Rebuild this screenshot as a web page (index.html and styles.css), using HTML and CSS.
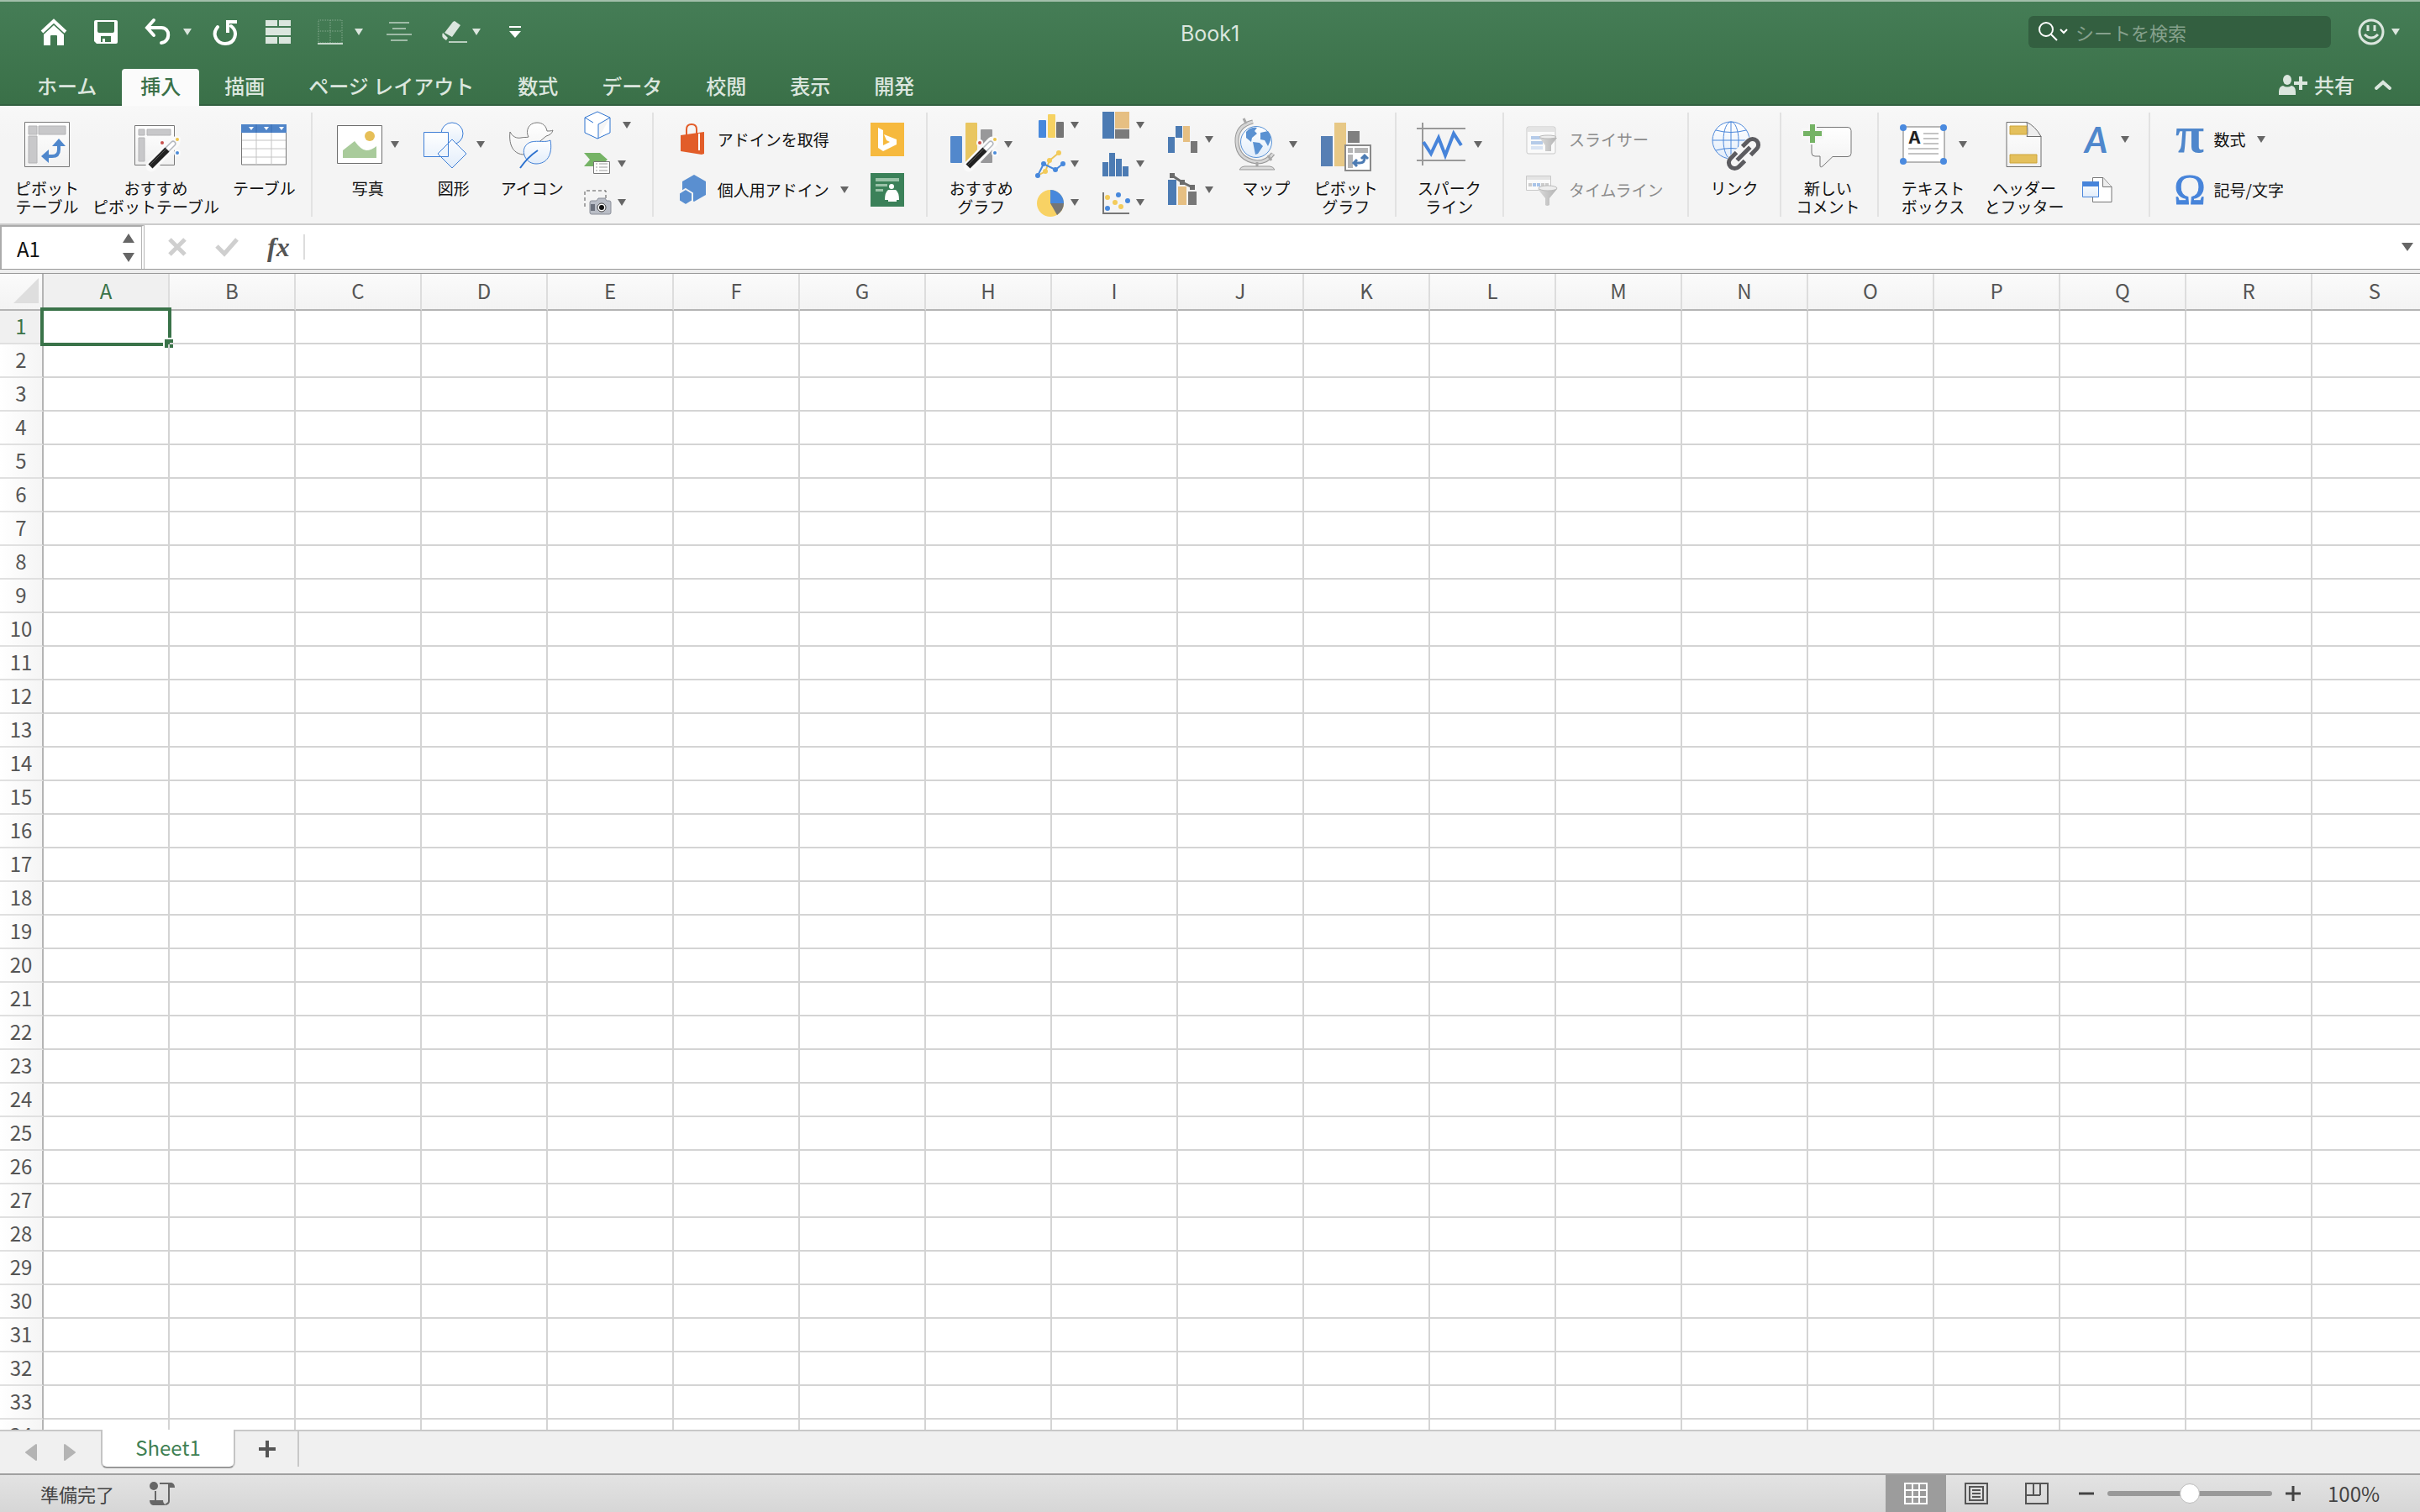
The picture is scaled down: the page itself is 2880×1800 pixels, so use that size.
FILE: index.html
```html
<!DOCTYPE html>
<html lang="ja">

<head>
    <meta charset="UTF-8">
    <meta name="viewport" content="width=device-width, initial-scale=1.0">
    <title>Book1</title>
    <link rel="stylesheet" href="styles.css">
</head>

<body>
    <svg class="defs" width="0" height="0" aria-hidden="true">
        <defs>
            <linearGradient id="paper" x1="0" y1="0" x2="0" y2="1">
                <stop offset="0" stop-color="#fff" />
                <stop offset="1" stop-color="#f1f1f1" />
            </linearGradient>
            <linearGradient id="sky" x1="0" y1="0" x2="0" y2="1">
                <stop offset="0" stop-color="#fff" />
                <stop offset="1" stop-color="#e2edfa" />
            </linearGradient>
            <linearGradient id="funnel" x1="0" y1="0" x2="1" y2="0">
                <stop offset="0" stop-color="#dadada" />
                <stop offset="1" stop-color="#b4b4b4" />
            </linearGradient>
        </defs>
        <symbol id="wand" viewBox="0 0 60 60">
            <path d="M22 53L50 24" stroke="#fafafa" stroke-width="13" stroke-linecap="round" />
            <circle cx="35" cy="25" r="4" fill="#fafafa" />
            <circle cx="53" cy="21" r="4" fill="#fafafa" />
            <circle cx="53" cy="37" r="4" fill="#fafafa" />
            <path d="M38 36L48 26" stroke="#b3b7bd" stroke-width="7" stroke-linecap="round" />
            <path d="M41 33L48 26" stroke="#fff" stroke-width="4" stroke-linecap="round" />
            <path d="M21 53L41 33" stroke="#222" stroke-width="7" />
            <path d="M21 51L40 32" stroke="#555" stroke-width="1" />
            <circle cx="35" cy="25" r="2" fill="#c8504c" />
            <circle cx="53" cy="21" r="2" fill="#ecc34b" />
            <circle cx="53" cy="37" r="2" fill="#4b8bd8" />
        </symbol>
    </svg>

    <header class="top">
        <div class="title_bar">
            <div class="quick">
                <button aria-label="ホーム画面"><svg width="32" height="32" viewBox="0 0 32 32"><path d="M2 16L16 3l14 13" fill="none" stroke="#fff" stroke-width="4" /><path d="M4 19L16 8l12 11v13h-8V21q0-1-1-1h-6q-1 0-1 1v11H4z" fill="#fff" /></svg></button>
                <button aria-label="保存"><svg width="28" height="30" viewBox="0 0 28 30"><path d="M2 1h24q2 0 2 2v24q0 2-2 2H3l-3-3V3q0-2 2-2z" fill="#fff" /><path d="M4 3h20v11q0 2-2 2H6q-2 0-2-2zM8 20h12v7h-7v-4h-3v4H8z" fill="#42784f" /></svg></button>
                <button aria-label="元に戻す"><svg width="32" height="32" viewBox="0 0 32 32"><path d="M11 2L3 11l8 9M3 11h17c11 0 11 17 0 18" fill="none" stroke="#fff" stroke-width="4" stroke-linecap="round" /></svg><i class="arrow"></i></button>
                <button aria-label="繰り返し"><svg width="30" height="32" viewBox="0 0 30 32"><path d="M5 10C-3 20 5 30 14 30c12 0 16-14 7-21" fill="none" stroke="#fff" stroke-width="4" stroke-linecap="round" /><path d="M17 17V4h11" fill="none" stroke="#fff" stroke-width="4" /></svg></button>
                <button aria-label="結合"><svg width="30" height="30" viewBox="0 0 30 30" fill="#dbe6de"><path d="M0 1h14v7H0zM16 1h14v7H16zM0 10h30v9H0zM0 21h14v8H0zM16 21h14v8H16z" /></svg></button>
                <button aria-label="罫線"><svg width="30" height="32" viewBox="0 0 30 32"><path d="M1 2h28v27H1zM15 2v27M1 15h28" fill="none" stroke="#86a98f" stroke-width="1" stroke-dasharray="1 1" /><path d="M0 30h30" stroke="#c6d7cb" stroke-width="2" /></svg><i class="arrow"></i></button>
                <button aria-label="中央揃え"><svg width="30" height="30" viewBox="0 0 30 30"><path d="M3 4h24M7 11h16M0 18h30M5 25h20" stroke="#9fbba7" stroke-width="2" /></svg></button>
                <button aria-label="クリア"><svg width="30" height="30" viewBox="0 0 30 30"><path d="M15 2l7 5-10 14-9-5L13 3zM1 16l6 6-2 3q-7-4-4-9z" fill="#dbe6de" /><path d="M8 27h22" stroke="#b9cdbf" stroke-width="2" /></svg><i class="arrow"></i></button>
                <button aria-label="ツール バーのユーザー設定"><svg width="14" height="16" viewBox="0 0 14 16" fill="#fff"><path d="M0 1h14v2H0zM0 7h14l-7 8z" /></svg></button>
            </div>
            <h1>Book1</h1>
            <div class="title_right">
                <label class="search">
                    <svg width="36" height="24" viewBox="0 0 36 24" fill="none" stroke="#fff" stroke-width="2"><circle cx="9" cy="9" r="8" /><path d="M15 15l7 7M26 9l4 4 4-4" /></svg>
                    <input type="text" placeholder="シートを検索" aria-label="シートを検索">
                </label>
                <button aria-label="フィードバック"><svg width="32" height="32" viewBox="0 0 32 32" fill="none" stroke="#dbe6de" stroke-width="3"><circle cx="16" cy="16" r="14" /><path d="M12 8v7M20 8v7M8 19q8 8 16 0" /></svg><i class="arrow"></i></button>
            </div>
        </div>
        <nav class="tabs">
            <button>ホーム</button>
            <button class="current">挿入</button>
            <button>描画</button>
            <button>ページ レイアウト</button>
            <button>数式</button>
            <button>データ</button>
            <button>校閲</button>
            <button>表示</button>
            <button>開発</button>
            <div class="share">
                <button><svg width="36" height="26" viewBox="0 0 36 26" fill="#dbe6de"><ellipse cx="10" cy="7" rx="5" ry="6" /><path d="M0 25v-4q0-6 5-7 5 3 10 0 5 1 5 7v4zM24 3h4v6h6v4h-6v6h-4v-6h-6V9h6z" /></svg>共有</button>
                <button aria-label="リボンを折りたたむ"><svg width="20" height="12" viewBox="0 0 20 12"><path d="M2 10l8-7 8 7" fill="none" stroke="#dbe6de" stroke-width="4" stroke-linecap="round" /></svg></button>
            </div>
        </nav>
    </header>

    <div class="ribbon">
        <div class="group g_table">
            <button class="big">
                <span class="pic"><svg width="54" height="54" viewBox="0 0 54 54"><path d="M.5 .5h53v53H.5z" fill="url(#paper)" stroke="#777" /><path d="M5 5h10v10H5zM17 5h32v10H17zM5 17h10v32H5z" fill="#c8c8ca" stroke="#b4b4b6" stroke-width="1" /><path d="M28 41h5q8 0 8-8v-5" fill="none" stroke="#4f87cc" stroke-width="4" /><path d="M41 20l8 9H33zM20 41l9-8v16z" fill="#4f87cc" /></svg></span>
                <span>ピボット<br>テーブル</span>
            </button>
            <button class="big">
                <span class="pic"><svg width="54" height="54" viewBox="0 0 54 54"><path d="M2.500 4.500h47v47h-47z" fill="url(#paper)" stroke="#777" /><path d="M7 9h7v7H7zM17 9h28v7H17zM7 19h7v28H7z" fill="#c8c8ca" stroke="#b4b4b6" /><use href="#wand" width="60" height="60" /></svg></span>
                <span>おすすめ<br>ピボットテーブル</span>
            </button>
            <button class="big">
                <span class="pic"><svg width="54" height="54" viewBox="0 0 54 54"><path d="M.5 4h53v47H.5z" fill="#fff" stroke="#777" /><path d="M1 22h52M1 32h52M1 42h52M18 12v39M36 12v39" stroke="#c4c4c4" /><path d="M0 3h54v10H0z" fill="#4f84c8" /><path d="M18 3v10M36 3v10" stroke="#3a6fb5" /><path d="M9 6h6l-3 4zM27 6h6l-3 4zM45 6h6l-3 4z" fill="#fff" /></svg></span>
                <span>テーブル</span>
            </button>
        </div>

        <div class="group g_pict">
            <button class="big wide">
                <span class="pic"><svg width="54" height="54" viewBox="0 0 54 54"><path d="M.5 4.500h53v45H.5z" fill="#fff" stroke="#6e6e6e" /><circle cx="39" cy="17" r="6" fill="#e6bf58" /><path d="M7 34l14-11q8 11 14 11 6 0 12-5v14H7z" fill="#a9cb9b" /></svg><i class="arrow"></i></span>
                <span>写真</span>
            </button>
            <button class="big wide">
                <span class="pic"><svg width="54" height="54" viewBox="0 0 54 54" fill="url(#sky)" stroke="#3f7fd6"><circle cx="35" cy="14" r="13" /><path d="M1.500 12.500h29v29h-29zM35 21l17 17-17 17-17-17z" /></svg><i class="arrow"></i></span>
                <span>図形</span>
            </button>
            <button class="big">
                <span class="pic"><svg width="54" height="54" viewBox="0 0 54 54"><path d="M1 12c3 6 8 8 13 7 4-1 6 0 9-1-4-7 0-17 10-17 7 0 11 4 12 10 3 0 5 0 7-1-1 4-4 6-8 7-2 2-4 3-6 5l-20 17C6 39-1 29 1 12z" fill="url(#paper)" stroke="#777" /><path d="M49 22c3 17-4 28-17 28-15 0-21-21-6-26 9-2 17 1 23-2z" fill="url(#sky)" stroke="#3f7fd6" /><path d="M34 34Q22 42 13 55" fill="none" stroke="#2d72cf" stroke-width="2" /></svg></span>
                <span>アイコン</span>
            </button>
            <div class="stack3">
                <button class="cube" aria-label="3D モデル"><svg width="32" height="34" viewBox="0 0 32 34" fill="#fff" stroke="#2f74d0"><path d="M16 1l15 7v18l-15 7-15-7V8zM31 8l-14 8v17M1 8l10 6" /></svg><i class="arrow"></i></button>
                <button aria-label="SmartArt"><svg width="32" height="26" viewBox="0 0 32 26"><path d="M0 0h19l9 8-9 8H0l7-8z" fill="#75b365" /><path d="M11.500 10.500h19v14h-19z" fill="#fff" stroke="#777" /><path d="M14 13h2M18 13h10M14 17h2M18 17h10M14 21h2M18 21h10" stroke="#999" /></svg><i class="arrow"></i></button>
                <button aria-label="スクリーンショット"><svg width="32" height="30" viewBox="0 0 32 30"><path d="M1 20V1h25v12" fill="none" stroke="#555" stroke-dasharray="4 3" /><path d="M9 13h6l2-3h8l2 3h3q2 0 2 2v12q0 2-2 2H9q-2 0-2-2V15q0-2 2-2z" fill="#b9bdc6" stroke="#8b8f99" /><path d="M8 17h5v8H8z" fill="#6c717d" /><circle cx="21" cy="21" r="5" fill="#fff" stroke="#444" /><circle cx="21" cy="21" r="3" fill="#111" /></svg><i class="arrow"></i></button>
            </div>
        </div>

        <div class="group g_addin">
            <div class="stack2">
                <button><svg width="34" height="38" viewBox="0 0 34 38"><path d="M10 14V7q0-6 6-6t6 6v5" fill="none" stroke="#e25d29" stroke-width="2" /><path d="M3 14l28-4v26l-3 1-25-4z" fill="#e25d29" /><path d="M25 12v20" stroke="#fff" stroke-width="2" /></svg>アドインを取得</button>
                <button><svg width="34" height="36" viewBox="0 0 34 36" fill="#5a8fd0"><path d="M19 0l14 8v16l-14 8-14-8V8z" /><path d="M9 17l8 5v9l-8 5-8-5v-9z" stroke="#f4f4f4" stroke-width="2" /></svg>個人用アドイン<i class="arrow"></i></button>
            </div>
            <div class="stack2">
                <button aria-label="Bing 地図"><svg width="40" height="40" viewBox="0 0 40 40"><path d="M0 0h40v40H0z" fill="#f6b93e" /><path d="M9 6l6 3v18l8-4-4-2-3-7 15 6v6L15 34l-6-4z" fill="#fff" /></svg></button>
                <button aria-label="ピープル グラフ"><svg width="40" height="40" viewBox="0 0 40 40"><path d="M0 0h40v40H0z" fill="#3b8159" /><path d="M6 6h28v4H6zM6 13h14v3H6zM6 19h9v3H6z" fill="#9ac3a8" /><circle cx="25" cy="16" r="3" fill="#fff" /><path d="M21 20h9q4 3 4 12h-3v2H21v-2h-4q0-9 4-12z" fill="#fff" /></svg></button>
            </div>
        </div>

        <div class="group g_chart">
            <button class="big">
                <span class="pic"><svg width="54" height="54" viewBox="0 0 54 54"><rect x="0" y="17" width="14" height="32" rx="1" fill="#5288cc" /><rect x="18" y="1" width="14" height="48" rx="1" fill="#e9c660" /><rect x="36" y="9" width="14" height="40" rx="1" fill="#98989a" /><use href="#wand" width="60" height="60" /></svg><i class="arrow"></i></span>
                <span>おすすめ<br>グラフ</span>
            </button>
            <div class="stack3">
                <button aria-label="縦棒"><svg width="36" height="32" viewBox="0 0 36 32"><rect x="4" y="10" width="9" height="21" rx="1" fill="#4788dc" /><rect x="15" y="3" width="9" height="28" rx="1" fill="#f6d262" /><rect x="25" y="12" width="9" height="19" rx="1" fill="#757575" /></svg><i class="arrow"></i></button>
                <button aria-label="折れ線"><svg width="36" height="32" viewBox="0 0 36 32" fill="none" stroke-width="2"><path d="M3 30l9-5 5-13L28 3" stroke="#ecc558" /><g fill="#f3cb5a"><circle cx="12" cy="25" r="3" /><circle cx="17" cy="12" r="3" /><circle cx="28" cy="3" r="3" /></g><path d="M3 30l7-14 14 7 9-7" stroke="#4788dc" /><g fill="#4788dc"><circle cx="3" cy="30" r="3" /><circle cx="10" cy="16" r="3" /><circle cx="24" cy="23" r="3" /><circle cx="33" cy="16" r="3" /></g></svg><i class="arrow"></i></button>
                <button aria-label="円"><svg width="36" height="32" viewBox="0 0 36 32"><circle cx="18" cy="17" r="16" fill="#f8d264" /><path d="M18 17V1a16 16 0 0 1 16 16z" fill="#4788dc" /><path d="M18 17h16q0 8-8 14z" fill="#757575" /></svg><i class="arrow"></i></button>
            </div>
            <div class="stack3">
                <button aria-label="階層構造"><svg width="36" height="32" viewBox="0 0 36 32"><path d="M2 0h14v32H2z" fill="#4c7bb3" /><path d="M17 0h17v20H17z" fill="#e6bf82" /><path d="M17 21h17v11H17z" fill="#7b7b7b" /></svg><i class="arrow"></i></button>
                <button aria-label="統計"><svg width="36" height="32" viewBox="0 0 36 32"><path d="M2 14h7v17H2zM10 3h7v28h-7zM18 10h7v21h-7zM26 19h7v12h-7z" fill="#4c7bb3" /></svg><i class="arrow"></i></button>
                <button aria-label="散布図"><svg width="36" height="32" viewBox="0 0 36 32"><path d="M3 4v25h31" fill="none" stroke="#777" stroke-width="2" /><g fill="#f3cb5a"><circle cx="8" cy="10" r="3" /><circle cx="17" cy="16" r="3" /><circle cx="24" cy="21" r="3" /></g><g fill="#4788dc"><circle cx="21" cy="7" r="3" /><circle cx="32" cy="14" r="3" /><circle cx="8" cy="23" r="3" /></g></svg><i class="arrow"></i></button>
            </div>
            <div class="stack2 tight">
                <button aria-label="ウォーターフォール"><svg width="40" height="40" viewBox="0 0 40 40"><path d="M2 17h8v19H2zM11 4h8v14h-8z" fill="#4c7bb3" /><path d="M20 4h8v19h-8z" fill="#e6bf82" /><path d="M29 22h8v14h-8z" fill="#777" /></svg><i class="arrow"></i></button>
                <button aria-label="組み合わせ"><svg width="40" height="40" viewBox="0 0 40 40"><path d="M2 8h10v30H2z" fill="#4c7bb3" /><path d="M14 16h10v22H14z" fill="#e6bf82" /><path d="M26 22h10v16H26z" fill="#777" /><path d="M4 0h6v6H4zM16 8h6v6h-6zM28 14h6v6h-6z" fill="#6c6c6c" /><path d="M7 3l12 8 12 6" fill="none" stroke="#6c6c6c" stroke-width="3" /></svg><i class="arrow"></i></button>
            </div>
            <div class="pair">
                <button class="big">
                    <span class="pic"><svg width="54" height="60" viewBox="0 -3 54 60"><path d="M21 0Q1 5 2 24q1 21 24 24 12 0 19-10" fill="none" stroke="#999" stroke-width="5" /><path d="M21 0Q1 5 2 24q1 21 24 24 12 0 19-10" fill="none" stroke="#d6d6d6" stroke-width="3" /><path d="M10-4l3 6M39 40l4 6M26 48v6" stroke="#a8a8a8" stroke-width="3" /><path d="M5 57q2-4 6-4h30q4 0 6 4z" fill="#dcdcdc" stroke="#999" /><circle cx="25" cy="24" r="18.500" fill="url(#sky)" stroke="#5a93d6" stroke-width="1" /><path d="M13 12q5-6 13-5l-3 4 3 3-6 5-1 5-6-5zM21 24l8 1 4 4-6 9-3 1zM30 13l9-2q4 5 3 11l-3 7-4-7-5-1z" fill="#5b92d2" /></svg><i class="arrow"></i></span>
                    <span>マップ</span>
                </button>
                <button class="big">
                    <span class="pic"><svg width="60" height="54" viewBox="0 0 60 54"><path d="M0 17h14v36H0z" fill="#567fb4" /><path d="M16 1h14v52H16z" fill="#e7c886" /><path d="M32 11h14v14H32z" fill="#808080" /><path d="M29 28h30v30H29z" fill="#fff" stroke="#8a8a8a" stroke-width="2" /><path d="M32 31h6v6h-6zM40 31h16v6H40zM32 39h6v16h-6z" fill="#b5b5b5" /><path d="M40 49h6q6 0 6-6v-1M43 45l-4 4 4 4M48 44l4-4 4 4" fill="none" stroke="#4c7bb3" stroke-width="3" /></svg></span>
                    <span>ピボット<br>グラフ</span>
                </button>
            </div>
        </div>

        <div class="group g_spark">
            <button class="big">
                <span class="pic"><svg width="58" height="54" viewBox="0 0 58 54" fill="none"><path d="M7 1v51M0 8h58M0 46h58" stroke="#999" stroke-width="2" /><path d="M8 24l9 14 9-19 8 21 10-26 9 14" stroke="#4784da" stroke-width="4" /></svg><i class="arrow"></i></span>
                <span>スパーク<br>ライン</span>
            </button>
        </div>

        <div class="group g_filter">
            <div class="stack2">
                <button disabled><svg width="38" height="40" viewBox="0 0 38 40"><rect x="1" y="5" width="34" height="32" rx="2" fill="#fafafa" stroke="#c9c9c9" /><path d="M2 6h32v5H2z" fill="#e4e4e4" /><path d="M6 16h12v4H6zM6 22h14v4H6z" fill="#b5cbe9" /><path d="M6 28h14v4H6z" fill="#d9e4f3" /><path d="M16 18l7 9v7h7v-7l7-9z" fill="url(#funnel)" /><ellipse cx="26" cy="17" rx="10" ry="2" fill="#eee" stroke="#bbb" /></svg>スライサー</button>
                <button disabled><svg width="38" height="40" viewBox="0 0 38 40"><path d="M.5 3.500h29v17H.5z" fill="#fafafa" stroke="#c9c9c9" /><path d="M1 4h28v4H1z" fill="#e4e4e4" /><path d="M3 12h4v4H3zM18 12h4v4h-4zM23 12h4v4h-4z" fill="#ccc" /><path d="M8 12h4v4H8zM13 12h4v4h-4z" fill="#a9c4e8" /><path d="M14 19l9 11v8q2 2 5 0v-8l9-11z" fill="url(#funnel)" /><ellipse cx="26" cy="18" rx="11" ry="3" fill="#eee" stroke="#bbb" /></svg>タイムライン</button>
            </div>
        </div>

        <div class="group g_link">
            <button class="big">
                <span class="pic"><svg width="57" height="54" viewBox="0 0 57 54" fill="none"><g stroke="#4b87da"><circle cx="24" cy="22" r="22" fill="url(#sky)" /><ellipse cx="24" cy="22" rx="9" ry="22" /><path d="M24 0v44M2 22h44M6 10q18 5 36 0M6 34q18-5 36 0" /></g><g transform="rotate(-45 39 38)"><path d="M24 38h30" stroke="#f6f6f6" stroke-width="20" stroke-linecap="round" /><path d="M34 31H24a7 7 0 0 0 0 14h10M44 31h10a7 7 0 0 1 0 14H44" stroke="#5c5c60" stroke-width="5" /><path d="M28 38h22" stroke="#5c5c60" stroke-width="5" /></g></svg></span>
                <span>リンク</span>
            </button>
        </div>

        <div class="group g_note">
            <button class="big">
                <span class="pic"><svg width="58" height="54" viewBox="0 0 58 54"><path d="M13 6.500h39q4 0 4 4v27q0 4-4 4H34L22 53q-3 2-3-1V41h-6q-4 0-4-4v-27q0-3 4-3z" fill="url(#paper)" stroke="#777" /><path d="M5 1h10v6h8v14h-8v6H5v-6h-8V7h8z" fill="#f7f7f7" /><path d="M7 3h6v8h8v6h-8v8H7v-8h-8v-6h8z" fill="#75b365" /></svg></span>
                <span>新しい<br>コメント</span>
            </button>
        </div>

        <div class="group g_text">
            <button class="big">
                <span class="pic"><svg width="60" height="54" viewBox="0 0 60 54"><path d="M4 6h49v42H4z" fill="#fff" stroke="#777" /><text x="10" y="26" class="tb_a">A</text><path d="M28 14h18M28 20h18M28 26h18M10 32h36M10 38h36" stroke="#c4c4c4" stroke-width="2" /><g fill="#4a8adf"><circle cx="4" cy="7" r="4" /><circle cx="52" cy="7" r="4" /><circle cx="4" cy="47" r="4" /><circle cx="52" cy="47" r="4" /></g></svg><i class="arrow"></i></span>
                <span>テキスト<br>ボックス</span>
            </button>
            <button class="big">
                <span class="pic"><svg width="54" height="54" viewBox="0 0 54 54"><path d="M6 .5h24l17 17v36H6z" fill="url(#paper)" stroke="#6e6e6e" /><path d="M10 5h20v10H10zM10 39h32v10H10z" fill="#e4c05c" stroke="#cda53a" /><path d="M30 .5q2 14 0 17h17Q40 5 30 .5z" fill="#eee" stroke="#6e6e6e" /></svg></span>
                <span>ヘッダー<br>とフッター</span>
            </button>
            <div class="stack2 tight">
                <button aria-label="ワードアート"><svg width="40" height="40" viewBox="0 0 40 40"><text x="3" y="36" class="wa">A</text></svg><i class="arrow"></i></button>
                <button aria-label="オブジェクト"><svg width="36" height="40" viewBox="0 0 36 40"><path d="M12.500 5.500H25l10 11v18H12.500z" fill="#fff" stroke="#777" /><path d="M24.500 5.500v11H35" fill="#eee" stroke="#777" /><path d="M.5 10.500h19v18H.5z" fill="url(#sky)" stroke="#4784da" /><path d="M0 10h20v6H0z" fill="#4784da" /></svg></button>
            </div>
        </div>

        <div class="group g_sym">
            <div class="stack2">
                <button><svg width="32" height="40" viewBox="0 0 32 40"><text x="16" y="35" class="pi">π</text></svg>数式<i class="arrow"></i></button>
                <button><svg width="32" height="40" viewBox="0 0 32 40"><text x="16" y="36" class="omega">Ω</text></svg>記号/文字</button>
            </div>
        </div>
    </div>

    <div class="formula">
        <div class="name_box">
            <input type="text" value="A1" aria-label="名前ボックス">
            <svg width="14" height="34" viewBox="0 0 14 34" fill="#666"><path d="M7 0l7 11H0zM0 23h14L7 34z" /></svg>
        </div>
        <button aria-label="キャンセル"><svg width="22" height="22" viewBox="0 0 22 22"><path d="M2 2l18 18M20 2L2 20" stroke="#cfcfcf" stroke-width="5" /></svg></button>
        <button aria-label="入力"><svg width="28" height="22" viewBox="0 0 28 22"><path d="M2 10l9 9L26 2" fill="none" stroke="#cfcfcf" stroke-width="5" /></svg></button>
        <button class="fx">fx</button>
        <input class="formula_text" type="text" aria-label="数式バー">
        <button aria-label="数式バーの展開"><i class="arrow large"></i></button>
    </div>

    <main class="sheet">
        <table>
            <thead></thead>
            <tbody></tbody>
        </table>
    </main>

    <div class="sheet_tabs">
        <button aria-label="前のシート"><svg width="14" height="20" viewBox="0 0 14 20"><path d="M13 1v18L1 10z" fill="#b4b4b4" stroke="#b4b4b4" stroke-width="2" stroke-linejoin="round" /></svg></button>
        <button class="next" aria-label="次のシート"><svg width="14" height="20" viewBox="0 0 14 20"><path d="M1 1v18l12-9z" fill="#b4b4b4" stroke="#b4b4b4" stroke-width="2" stroke-linejoin="round" /></svg></button>
        <button class="sheet_name">Sheet1</button>
        <button class="add" aria-label="シートの追加"><svg width="20" height="20" viewBox="0 0 20 20"><path d="M10 0v20M0 10h20" stroke="#555" stroke-width="4" /></svg></button>
    </div>

    <footer class="status">
        <span>準備完了</span>
        <button class="macro" aria-label="マクロの記録"><svg width="30" height="28" viewBox="0 0 30 28"><circle cx="5" cy="5" r="5" fill="#666" /><path d="M7 11v12M12 2h14M23 3v20q0 3-4 4" fill="none" stroke="#666" stroke-width="2" /><path d="M22 1h4q4 1 4 6h-6zM0 22h16q0 4 4 6H4q-4-1-4-6z" fill="#666" /></svg></button>
        <div class="views">
            <button class="on" aria-label="標準"><svg width="28" height="26" viewBox="0 0 28 26" fill="none" stroke="#fff" stroke-width="2"><path d="M1 1h26v24H1zM1 9h26M1 17h26M10 1v24M18 1v24" /></svg></button>
            <button aria-label="ページ レイアウト表示"><svg width="28" height="26" viewBox="0 0 28 26" fill="none" stroke="#555" stroke-width="2"><path d="M1 1h26v24H1zM6 5h16v16H6zM9 9h10M9 13h10M9 17h10" /></svg></button>
            <button aria-label="改ページ プレビュー"><svg width="28" height="26" viewBox="0 0 28 26" fill="none" stroke="#555" stroke-width="2"><path d="M1 1h26v24H1zM10 1v14M18 1v14M1 15h17" /></svg></button>
        </div>
        <div class="zoom">
            <button aria-label="縮小"><svg width="18" height="18" viewBox="0 0 18 18"><path d="M0 9h18" stroke="#444" stroke-width="3" /></svg></button>
            <input type="range" min="0" max="100" value="50" aria-label="ズーム">
            <button aria-label="拡大"><svg width="18" height="18" viewBox="0 0 18 18"><path d="M0 9h18M9 0v18" stroke="#444" stroke-width="3" /></svg></button>
            <span>100%</span>
        </div>
    </footer>

    <script src="script.js"></script>
</body>

</html>
```
FILE: styles.css
```css
* {
    margin: 0;
    padding: 0;
    box-sizing: border-box;
}

body {
    display: flex;
    flex-direction: column;
    height: 100vh;
    overflow: hidden;
    font-family: "Noto Sans CJK JP", sans-serif;
    font-size: 19px;
    line-height: 22px;
    color: #111;
    background-color: #fff;
}

button,
input {
    border: 0;
    outline: 0;
    background: none;
    font: inherit;
    color: inherit;
}

button {
    display: flex;
    align-items: center;
    white-space: nowrap;
}

svg {
    flex: none;
    overflow: visible;
}

.defs {
    position: absolute;
}

.arrow {
    flex: none;
    border: 5px solid transparent;
    border-top: 8px solid #666;
    border-bottom: 0;
}

.arrow.large {
    border-width: 10px 7px 0;
}

/* 上部の緑色のバー */
.top {
    flex: none;
    height: 126px;
    border-top: 2px solid #a3bfab;
    border-bottom: 2px solid #336141;
    background: linear-gradient(#457d56, #3a7048);
    color: #dbe6de;
}

.top .arrow {
    border-top-color: #dbe6de;
}

.title_bar {
    display: grid;
    grid-template-columns: 1fr auto 1fr;
    align-items: center;
    height: 72px;
    padding: 0 24px;
}

.quick {
    display: flex;
    align-items: center;
    gap: 32px;
    padding-left: 24px;
}

.quick button {
    gap: 14px;
}

.quick button:nth-child(4) {
    margin-left: -6px;
}

.quick button:nth-child(7) {
    margin-left: -4px;
}

.quick button:nth-child(8) {
    gap: 6px;
    margin-left: 4px;
}

.quick button:nth-child(9) {
    margin-left: 2px;
}

h1 {
    padding-top: 4px;
    font-family: Inter, sans-serif;
    font-size: 25px;
    font-weight: 400;
}

.title_right {
    display: flex;
    justify-content: flex-end;
    gap: 32px;
}

.title_right button {
    gap: 8px;
}

.search {
    display: flex;
    align-items: center;
    gap: 8px;
    width: 360px;
    height: 38px;
    padding: 0 12px;
    border-radius: 6px;
    background-color: #335f40;
}

.search input {
    flex: 1;
    min-width: 0;
    font-size: 22px;
}

.search input::placeholder {
    color: #86a18d;
}

.tabs {
    display: flex;
    gap: 8px;
    height: 50px;
    padding: 8px 34px 0 22px;
    font-size: 24px;
    font-weight: 500;
}

.tabs > button {
    height: 44px;
    padding: 0 22px 4px;
    border-radius: 4px 4px 0 0;
}

.tabs .current {
    background-color: #fbfbfb;
    color: #3a7048;
}

.share {
    display: flex;
    align-items: center;
    gap: 24px;
    margin-left: auto;
    padding-bottom: 4px;
}

.share button {
    gap: 6px;
}

/* リボン */
.ribbon {
    display: flex;
    flex: none;
    height: 142px;
    padding: 8px 0;
    border-bottom: 2px solid #cbcbcb;
    background: linear-gradient(#f8f8f8, #f4f4f4 40px);
}

.group {
    display: flex;
    align-items: flex-start;
    border-right: 2px solid #e2e2e2;
}

.g_table {
    gap: 16px;
    padding: 0 18px;
}

.g_pict {
    gap: 10px;
    padding: 0 25px 0 20px;
}

.g_addin {
    gap: 26px;
    padding: 0 26px 0 29px;
}

.g_chart {
    gap: 26px;
    padding: 0 20px 0 26px;
}

.g_spark {
    padding: 0 24px;
}

.g_filter {
    padding: 0 28px 0 26px;
}

.g_link {
    padding: 0 25px 0 26px;
}

.g_note {
    padding: 0 20px 0 18px;
}

.g_text {
    gap: 21px;
    padding: 0 23px 0 25px;
}

.g_sym {
    padding-left: 31px;
    border-right: 0;
}

.big {
    flex-direction: column;
    padding-top: 8px;
    text-align: center;
}

.big.wide {
    padding-left: 9px;
    padding-right: 9px;
}

.pic {
    display: flex;
    align-items: center;
    gap: 10px;
    height: 60px;
    margin-bottom: 11px;
}

.pair {
    display: flex;
    gap: 20px;
}

.stack3 {
    display: flex;
    flex-direction: column;
    gap: 16px;
}

.g_pict .stack3 {
    margin-left: 14px;
}

.stack3 button {
    gap: 6px;
    height: 30px;
}

.g_pict .stack3 button {
    gap: 8px;
}

.g_pict .stack3 .cube {
    gap: 14px;
}

.stack2 {
    display: flex;
    flex-direction: column;
    gap: 20px;
    padding-top: 12px;
}

.stack2 button {
    gap: 13px;
    height: 40px;
}

.stack2.tight button {
    gap: 6px;
}

button:disabled {
    color: #8c8c8c;
}

.tb_a {
    font: bold 20px Inter, sans-serif;
    fill: #222;
}

.wa {
    font: italic bold 42px Lato, sans-serif;
    fill: #4f87cc;
}

.pi {
    font: bold 62px "Liberation Serif", serif;
    fill: #4f87cc;
    text-anchor: middle;
}

.omega {
    font: 50px "Liberation Serif", serif;
    fill: #4784da;
    stroke: #4784da;
    text-anchor: middle;
}

/* 数式バー */
.formula {
    display: flex;
    align-items: center;
    flex: none;
    height: 58px;
    padding: 0 8px 6px 0;
    background: linear-gradient(#fff 52px, #999 52px, #999 53px, #eee 53px, #eee 57px, #999 57px);
}

.name_box {
    display: flex;
    align-items: center;
    width: 172px;
    height: 52px;
    margin-right: 28px;
    padding-left: 18px;
    border: 2px solid #ababab;
    border-right: 4px double #b5b5b5;
    border-bottom: 0;
}

.name_box input {
    flex: 1;
    min-width: 0;
    font-size: 24px;
}

.name_box svg {
    margin-right: 8px;
}

.formula button {
    margin-right: 34px;
}

.formula .fx {
    margin-right: 16px;
    font: italic bold 32px/34px "Liberation Serif", serif;
    color: #555;
}

.formula_text {
    flex: 1;
    height: 30px;
    border-left: 2px solid #ddd;
}

.formula button:last-child {
    margin-right: 0;
}

/* シート */
.sheet {
    flex: 1;
    min-height: 0;
    overflow: hidden;
}

table {
    width: 2902px;
    table-layout: fixed;
    border-spacing: 0;
    font-size: 24px;
}

th {
    padding-bottom: 2px;
    font-weight: 400;
    line-height: 24px;
    color: #555;
}

thead th {
    width: 150px;
    height: 44px;
    border-right: 2px solid #ddd;
    border-bottom: 2px solid #b4b4b4;
    background: linear-gradient(#fbfbfb, #f3f3f3);
}

thead th:first-child {
    width: 52px;
    padding-left: 16px;
    border-right-color: #b4b4b4;
}

thead th svg {
    display: block;
}

tbody th {
    height: 40px;
    border-right: 2px solid #b4b4b4;
    border-bottom: 2px solid #e0e0e0;
    background: linear-gradient(90deg, #fff, #f5f5f5);
}

th.active {
    background: #f0f0f0;
    color: #3a7349;
}

td {
    position: relative;
    border-right: 2px solid #d4d4d4;
    border-bottom: 2px solid #d4d4d4;
}

.cursor {
    position: absolute;
    inset: -4px;
    border: 4px solid #3a7349;
}

.cursor::after {
    content: "";
    box-sizing: border-box;
    position: absolute;
    right: -8px;
    bottom: -8px;
    width: 14px;
    height: 14px;
    border: 2px solid #fff;
    background-color: #3a7349;
}

/* シート見出し */
.sheet_tabs {
    display: flex;
    flex: none;
    align-items: center;
    height: 52px;
    border-top: 2px solid #c8c8c8;
    background-color: #f0f0f0;
}

.sheet_tabs button {
    margin-left: 30px;
}

.sheet_tabs .next {
    margin-left: 32px;
}

.sheet_tabs .sheet_name {
    justify-content: center;
    align-self: flex-start;
    width: 160px;
    height: 46px;
    margin-top: -2px;
    padding-bottom: 2px;
    border: 2px solid #c4c4c4;
    border-top: 0;
    border-bottom-color: #999;
    border-radius: 0 0 7px 7px;
    background-color: #fff;
    font-size: 24px;
    color: #3f8053;
}

.sheet_tabs .add {
    align-self: flex-start;
    height: 42px;
    margin-left: 28px;
    padding-right: 26px;
    border-right: 2px solid #c8c8c8;
}

/* ステータスバー */
.status {
    display: flex;
    flex: none;
    align-items: center;
    height: 46px;
    padding: 0 44px 0 48px;
    border-top: 2px solid #a0a0a0;
    background: linear-gradient(#e3e3e3, #d6d6d6);
    font-size: 22px;
    color: #444;
}

.macro {
    margin-left: 42px;
}

.views {
    display: flex;
    margin-left: auto;
}

.views button {
    justify-content: center;
    width: 72px;
    height: 44px;
}

.views .on {
    background-color: #9c9c9c;
}

.zoom {
    display: flex;
    align-items: center;
    gap: 16px;
    margin-left: 14px;
}

.zoom span {
    min-width: 66px;
    margin-left: 16px;
    font-size: 24px;
}

.zoom input {
    width: 196px;
    height: 24px;
    appearance: none;
}

.zoom input::-webkit-slider-runnable-track {
    height: 6px;
    border-radius: 3px;
    background-color: #999;
}

.zoom input::-webkit-slider-thumb {
    width: 24px;
    height: 24px;
    margin-top: -9px;
    border: 1px solid #bbb;
    border-radius: 50%;
    background-color: #fff;
    appearance: none;
}
```
FILE: script.js
```js
var cols = 'ABCDEFGHIJKLMNOPQRS';
var rows = 34;

// 列見出し
var head = '<tr><th><svg width="30" height="30" viewBox="0 0 30 30"><path d="M30 0v30H0z" fill="#dedede" /></svg></th>';
for (var i = 0; i < cols.length; i++) {
    head += '<th' + (i == 0 ? ' class="active"' : '') + '>' + cols[i] + '</th>';
}
document.querySelector('thead').innerHTML = head + '</tr>';

// 行見出しとセル
var body = '';
for (var r = 1; r <= rows; r++) {
    body += '<tr><th' + (r == 1 ? ' class="active"' : '') + '>' + r + '</th>';
    for (var c = 0; c < cols.length; c++) {
        body += '<td>' + (r == 1 && c == 0 ? '<div class="cursor"></div>' : '') + '</td>';
    }
    body += '</tr>';
}
document.querySelector('tbody').innerHTML = body;
```
